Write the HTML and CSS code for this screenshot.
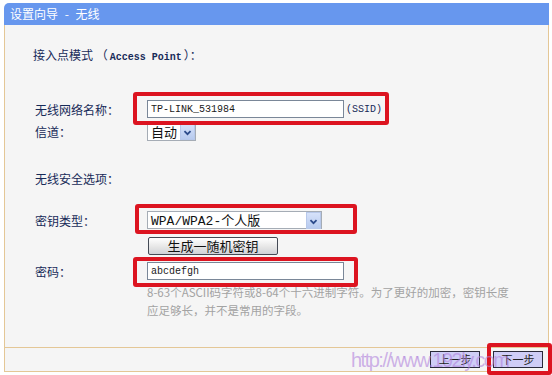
FILE: index.html
```html
<!DOCTYPE html>
<html lang="zh-CN">
<head>
<meta charset="utf-8">
<title>设置向导 - 无线</title>
<link rel="stylesheet" href="styles.css">
</head>
<body>
<div class="frame">
  <div class="titlebar">设置向导 - 无线</div>
  <div class="panel">
    <div class="intro">接入点模式 （<span class="mono">Access Point</span>）：</div>

    <div class="row r-ssid">
      <div class="label">无线网络名称：</div>
      <div class="hl hl-ssid">
        <input class="field" type="text" value="TP-LINK_531984">
        <span class="suffix">(SSID)</span>
      </div>
    </div>

    <div class="row r-channel">
      <div class="label">信道：</div>
      <div class="select sel-channel">
        <span class="sel-text cjk">自动</span>
        <span class="sel-arrow"><svg width="15" height="17" viewBox="0 0 15 17"><path d="M4 7 L7.5 10.5 L11 7" fill="none" stroke="#2b4a8a" stroke-width="2"/></svg></span>
      </div>
    </div>

    <div class="row r-sec">
      <div class="label">无线安全选项：</div>
    </div>

    <div class="row r-keytype">
      <div class="label">密钥类型：</div>
      <div class="hl hl-key">
        <div class="select sel-key">
          <span class="sel-text">WPA/WPA2-<span class="cjk">个人版</span></span>
          <span class="sel-arrow"><svg width="15" height="17" viewBox="0 0 15 17"><path d="M4 7 L7.5 10.5 L11 7" fill="none" stroke="#2b4a8a" stroke-width="2"/></svg></span>
        </div>
      </div>
    </div>

    <div class="row r-gen">
      <div class="label"></div>
      <button class="gen-btn" type="button">生成一随机密钥</button>
    </div>

    <div class="row r-pass">
      <div class="label">密码：</div>
      <div class="hl hl-pass">
        <input class="field" type="text" value="abcdefgh">
      </div>
    </div>

    <div class="help">8-63个ASCII码字符或8-64个十六进制字符。为了更好的加密，密钥长度<br>应足够长，并不是常用的字段。</div>
  </div>
  <div class="footer">
    <button class="nav-btn" type="button">上一步</button>
    <span class="hl hl-next"><button class="nav-btn" type="button">下一步</button></span>
    <span class="watermark">http://www.192ly.com</span>
  </div>
</div>
</body>
</html>
```
FILE: styles.css
```css
* { box-sizing: border-box; }
html, body {
  margin: 0;
  padding: 0;
  background: #ffffff;
  width: 552px;
  height: 375px;
  overflow: hidden;
  font-family: "Noto Sans CJK SC", "Liberation Sans", sans-serif;
}
.frame {
  margin: 3px 3px 0 4px;
  width: 545px;
}
.titlebar {
  height: 22px;
  background: #6797ee;
  border-radius: 5px 0 0 0;
  color: #ffffff;
  font-size: 12px;
  line-height: 22px;
  padding-left: 6px;
  word-spacing: 4px;
}
.panel {
  height: 322px;
  background: #f5f5f5;
  border-left: 1px solid #e4c796;
  border-right: 1px solid #e4c796;
  padding-left: 30px;
  display: flex;
  flex-direction: column;
}
.intro {
  margin-top: 20px;
  margin-left: -2px;
  height: 20px;
  line-height: 20px;
  font-size: 12px;
  color: #172a58;
  white-space: nowrap;
}
.mono {
  font-family: "Liberation Mono", monospace;
  font-size: 10px;
  font-weight: bold;
  margin: 0 2px;
}
.row {
  display: flex;
  align-items: center;
}
.label {
  width: 112px;
  flex: none;
  font-size: 12px;
  color: #172a58;
}
.r-ssid { margin-top: 35px; height: 18px; }
.r-channel { margin-top: 4px; height: 19px; }
.r-sec { margin-top: 27px; height: 20px; }
.r-keytype { margin-top: 23px; height: 18px; }
.r-gen { margin-top: 8px; height: 18px; }
.r-pass { margin-top: 7px; height: 18px; }

.hl {
  position: relative;
  display: flex;
  align-items: center;
}
.hl::after {
  content: "";
  position: absolute;
  border: 4px solid #dc1420;
  border-radius: 3px;
  pointer-events: none;
}
.hl-ssid::after { left: -14px; top: -8px; right: -7px; bottom: -7px; }
.hl-key::after { left: -12px; top: -7px; right: -35px; bottom: -5px; }
.hl-pass::after { left: -14px; top: -5px; right: -14px; bottom: -7px; }
.hl-next::after { left: -6px; top: -8px; right: -9px; bottom: -7px; }

.field {
  width: 197px;
  height: 18px;
  margin: 0;
  border: 1px solid #7a8798;
  background: #ffffff;
  padding: 0 3px;
  font-family: "Liberation Mono", monospace;
  font-size: 10px;
  color: #1a1a1a;
  outline: none;
}
.suffix {
  margin-left: 2px;
  font-family: "Liberation Mono", monospace;
  font-size: 10px;
  color: #172a58;
}
.select {
  display: flex;
  align-items: center;
  height: 19px;
  background: #ffffff;
  border: 1px solid #a5acb5;
  padding-left: 3px;
}
.sel-channel { width: 49px; }
.sel-key { width: 175px; height: 18px; }
.sel-text {
  flex: 1;
  font-family: "Liberation Mono", "Noto Sans CJK SC", monospace;
  font-size: 13px;
  color: #111111;
  line-height: 17px;
  white-space: nowrap;
}
.cjk {
  font-family: "Noto Sans CJK SC", sans-serif;
  font-size: 13px;
}
.sel-arrow {
  width: 15px;
  height: 17px;
  flex: none;
  display: flex;
  background: linear-gradient(#d6e2fa, #b8cbef);
  border: 1px solid #b7c8ea;
}
.sel-arrow svg { display: block; }

.gen-btn {
  width: 130px;
  height: 18px;
  margin: 0 0 0 1px;
  padding: 0;
  border: 1px solid #444a55;
  border-radius: 2px;
  background: linear-gradient(#ffffff, #e4e4e4 60%, #cfd2d8);
  font-family: "Noto Sans CJK SC", sans-serif;
  font-size: 13px;
  line-height: 16px;
  color: #111111;
}
.help {
  margin-top: 3px;
  padding-left: 112px;
  font-size: 11.5px;
  line-height: 18px;
  color: #a3a3a3;
  white-space: nowrap;
}
.footer {
  position: relative;
  height: 25px;
  background: #f5f5f5;
  border: 1px solid #e4c796;
  display: flex;
  align-items: center;
  justify-content: flex-end;
  gap: 13px;
  padding-right: 5px;
}
.nav-btn {
  width: 50px;
  height: 17px;
  margin: 0;
  padding: 0;
  border: 1px solid #2a2a3a;
  background: #cfcdf6;
  font-family: "Noto Sans CJK SC", sans-serif;
  font-size: 11px;
  line-height: 15px;
  color: #222222;
}
.watermark {
  position: absolute;
  left: 346px;
  top: 1px;
  font-family: "Liberation Sans", sans-serif;
  font-size: 20px;
  line-height: 22px;
  letter-spacing: -1.5px;
  color: rgba(176, 130, 220, 0.6);
  white-space: nowrap;
  pointer-events: none;
}
```
